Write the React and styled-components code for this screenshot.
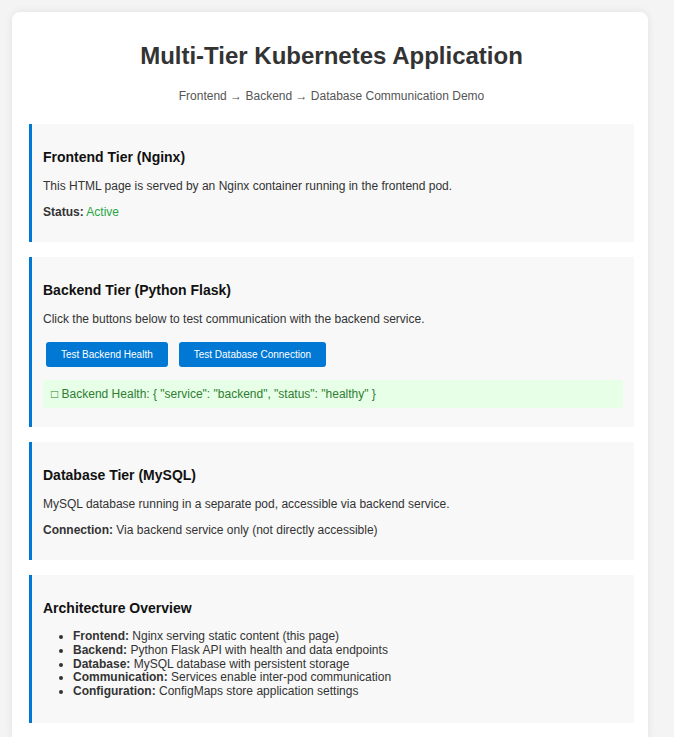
import React from 'react';
import styled, { createGlobalStyle } from 'styled-components';

const GlobalStyle = createGlobalStyle`
  html, body {
    margin: 0;
    padding: 0;
    overflow: hidden;
    background: #f4f4f4;
    font-family: "Liberation Sans", Arial, sans-serif;
    font-size: 12px;
    color: #333;
  }
`;

const Page = styled.div`
  padding: 12px 26px 0 12px;
`;

const Container = styled.div`
  background: #ffffff;
  border-radius: 8px;
  box-shadow: 0 0 8px rgba(0, 0, 0, 0.08);
  padding: 15px 14px 20px 17px;
`;

const Title = styled.h1`
  margin: 15px 0 19px;
  font-size: 24px;
  font-weight: bold;
  text-align: center;
  color: #333;
`;

const Subtitle = styled.p`
  margin: 0 0 21px;
  text-align: center;
  color: #555;
  font-size: 12px;
`;

const Section = styled.div`
  background: #f8f8f8;
  border-left: 3px solid #0078d4;
  padding: 11px;
  margin-bottom: 15px;

  &:last-child {
    margin-bottom: 0;
  }
`;

const Heading = styled.h3`
  margin: 14px 0;
  font-size: 14px;
  font-weight: bold;
  color: #111;
`;

const Text = styled.p`
  margin: 12px 0;
  line-height: normal;
`;

const Status = styled.span`
  color: ${props => (props.ok ? '#28a745' : '#333')};
`;

const ButtonRow = styled.div`
  display: flex;
  gap: 11px;
  padding: 4px 3px 0;
`;

const Button = styled.button`
  border: none;
  border-radius: 3px;
  background: #0078d4;
  color: #ffffff;
  font-family: "Liberation Sans", Arial, sans-serif;
  font-size: 10px;
  height: 25px;
  padding: 0 15px;
  cursor: pointer;
`;

const Result = styled.div`
  margin: 13px 0 8px;
  padding: 7px 8px;
  background: #e6ffe6;
  color: #2e7d32;
  border-radius: 3px;
  line-height: 14px;
`;

const List = styled.ul`
  margin: 12px 0 13px;
  padding-left: 30px;
  line-height: 13.8px;
`;

const items = [
  ['Frontend:', 'Nginx serving static content (this page)'],
  ['Backend:', 'Python Flask API with health and data endpoints'],
  ['Database:', 'MySQL database with persistent storage'],
  ['Communication:', 'Services enable inter-pod communication'],
  ['Configuration:', 'ConfigMaps store application settings'],
];

export default function App() {
  return (
    <>
      <GlobalStyle/>
      <Page>
        <Container>
          <Title>Multi-Tier Kubernetes Application</Title>
          <Subtitle>Frontend → Backend → Database Communication Demo</Subtitle>

          <Section>
            <Heading>Frontend Tier (Nginx)</Heading>
            <Text>This HTML page is served by an Nginx container running in the frontend pod.</Text>
            <Text><strong>Status:</strong> <Status ok>Active</Status></Text>
          </Section>

          <Section>
            <Heading>Backend Tier (Python Flask)</Heading>
            <Text>Click the buttons below to test communication with the backend service.</Text>
            <ButtonRow>
              <Button>Test Backend Health</Button>
              <Button>Test Database Connection</Button>
            </ButtonRow>
            <Result>□ Backend Health: {'{'} "service": "backend", "status": "healthy" {'}'}</Result>
          </Section>

          <Section>
            <Heading>Database Tier (MySQL)</Heading>
            <Text>MySQL database running in a separate pod, accessible via backend service.</Text>
            <Text><strong>Connection:</strong> Via backend service only (not directly accessible)</Text>
          </Section>

          <Section>
            <Heading>Architecture Overview</Heading>
            <List>
              {items.map(([label, text]) => (
                <li key={label}><strong>{label}</strong> {text}</li>
              ))}
            </List>
          </Section>
        </Container>
      </Page>
    </>
  );
}
